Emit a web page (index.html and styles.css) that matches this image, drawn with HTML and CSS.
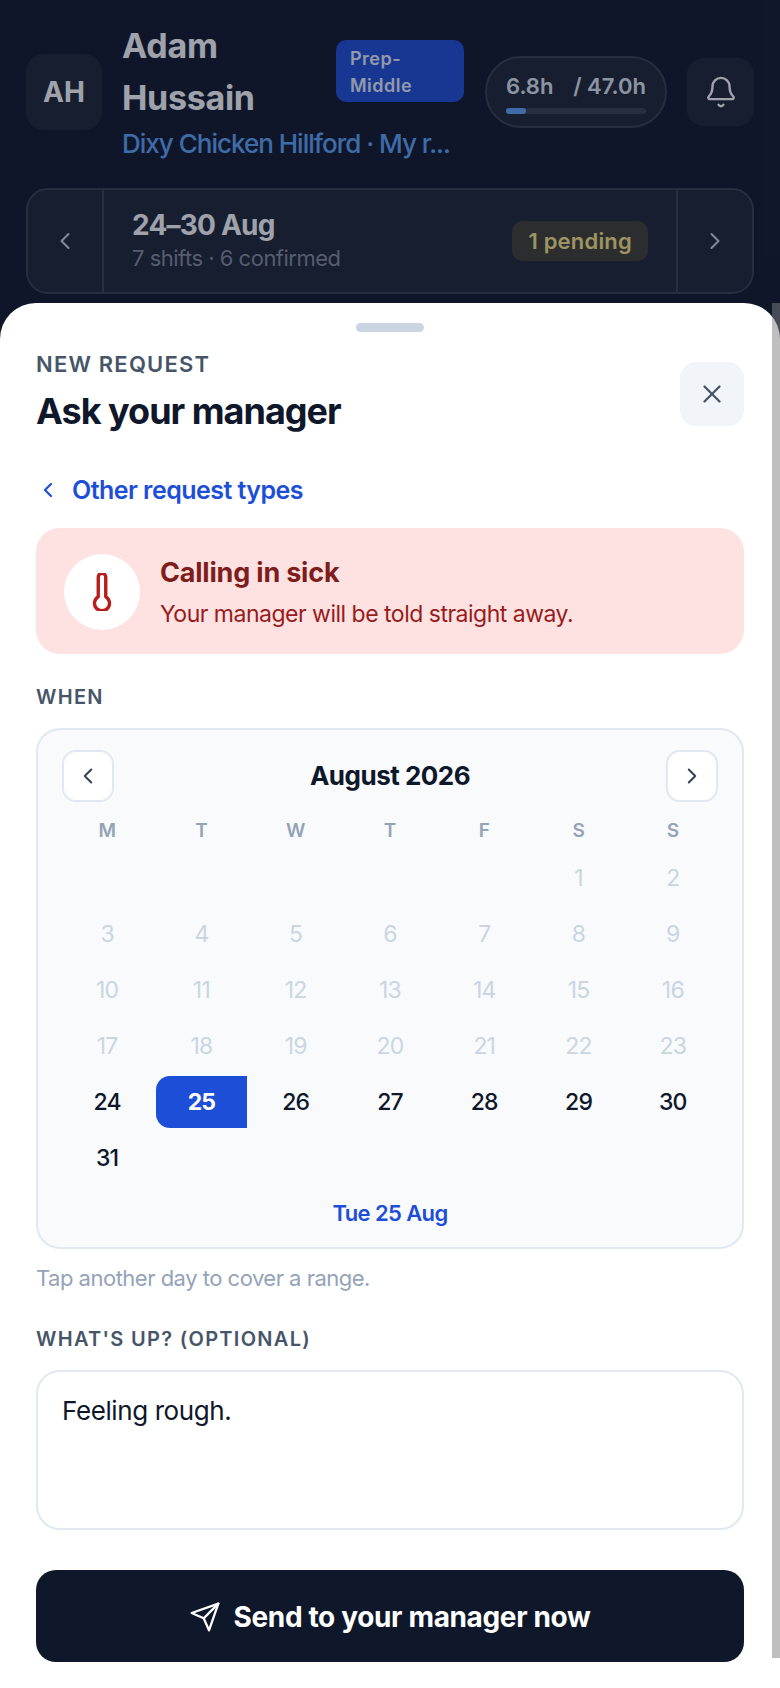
FILE: index.html
```html
<!DOCTYPE html>
<html lang="en">

<head>
    <meta charset="UTF-8">
    <meta name="viewport" content="width=device-width, initial-scale=1.0">
    <title>Ask your manager</title>
    <link rel="stylesheet" href="styles.css">
</head>

<body>
    <header class="top">
        <div class="top-row">
            <div class="avatar">AH</div>
            <div class="who">
                <div class="who-line">
                    <h1 class="who-name">Adam Hussain</h1>
                    <span class="role">Prep-Middle</span>
                </div>
                <p class="who-site">Dixy Chicken Hillford · My r...</p>
            </div>
            <div class="hours">
                <div class="hours-text"><b>6.8h</b><span>/ 47.0h</span></div>
                <div class="hours-bar"><div class="hours-fill"></div></div>
            </div>
            <button class="bell">
                <svg width="34" height="34" viewBox="0 0 24 24" fill="none" stroke="currentColor" stroke-width="1.700" stroke-linecap="round" stroke-linejoin="round">
                    <path d="M10.3 21a1.9 1.9 0 0 0 3.4 0" />
                    <path d="M3.3 15.3A1 1 0 0 0 4 17h16a1 1 0 0 0 .7-1.700C19.400 14 18 12.500 18 8A6 6 0 0 0 6 8c0 4.500-1.400 6-2.700 7.300" />
                </svg>
            </button>
        </div>
        <div class="week">
            <div class="week-nav">
                <svg width="28" height="28" viewBox="0 0 24 24" fill="none" stroke="currentColor" stroke-width="1.800" stroke-linecap="round" stroke-linejoin="round"><path d="m15 18-6-6 6-6" /></svg>
            </div>
            <div class="week-main">
                <div class="week-text">
                    <div class="week-title">24–30 Aug</div>
                    <div class="week-sub">7 shifts · 6 confirmed</div>
                </div>
                <span class="pending">1 pending</span>
            </div>
            <div class="week-nav week-nav-right">
                <svg width="28" height="28" viewBox="0 0 24 24" fill="none" stroke="currentColor" stroke-width="1.800" stroke-linecap="round" stroke-linejoin="round"><path d="m9 18 6-6-6-6" /></svg>
            </div>
        </div>
    </header>

    <div class="dim"></div>

    <section class="sheet">
        <div class="sheet-body">
            <div class="handle"></div>
            <div class="sheet-head">
                <div>
                    <div class="eyebrow">NEW REQUEST</div>
                    <h2 class="sheet-title">Ask your manager</h2>
                </div>
                <button class="close">
                    <svg width="30" height="30" viewBox="0 0 24 24" fill="none" stroke="currentColor" stroke-width="1.800" stroke-linecap="round" stroke-linejoin="round"><path d="M18 6 6 18" /><path d="m6 6 12 12" /></svg>
                </button>
            </div>
            <a class="back">
                <svg width="24" height="24" viewBox="0 0 24 24" fill="none" stroke="currentColor" stroke-width="2.200" stroke-linecap="round" stroke-linejoin="round"><path d="m15 18-6-6 6-6" /></svg>
                Other request types
            </a>
            <div class="sick">
                <div class="sick-icon">
                    <svg width="30" height="38" viewBox="4 2 16 20" fill="none" stroke="currentColor" stroke-width="1.800" stroke-linecap="round" stroke-linejoin="round"><path d="M14 4v10.540a4 4 0 1 1-4 0V4a2 2 0 0 1 4 0Z" /></svg>
                </div>
                <div class="sick-text">
                    <div class="sick-title">Calling in sick</div>
                    <div class="sick-sub">Your manager will be told straight away.</div>
                </div>
            </div>
            <div class="label label-when">WHEN</div>
            <div class="cal">
                <div class="cal-head">
                    <button class="cal-btn">
                        <svg width="26" height="26" viewBox="0 0 24 24" fill="none" stroke="currentColor" stroke-width="1.800" stroke-linecap="round" stroke-linejoin="round"><path d="m15 18-6-6 6-6" /></svg>
                    </button>
                    <div class="cal-month">August 2026</div>
                    <button class="cal-btn">
                        <svg width="26" height="26" viewBox="0 0 24 24" fill="none" stroke="currentColor" stroke-width="1.800" stroke-linecap="round" stroke-linejoin="round"><path d="m9 18 6-6-6-6" /></svg>
                    </button>
                </div>
                <div class="cal-days">
                    <span>M</span><span>T</span><span>W</span><span>T</span><span>F</span><span>S</span><span>S</span>
                </div>
                <div class="cal-grid">
                    <i></i><i></i><i></i><i></i><i></i><i class="off">1</i><i class="off">2</i>
                    <i class="off">3</i><i class="off">4</i><i class="off">5</i><i class="off">6</i><i class="off">7</i><i class="off">8</i><i class="off">9</i>
                    <i class="off">10</i><i class="off">11</i><i class="off">12</i><i class="off">13</i><i class="off">14</i><i class="off">15</i><i class="off">16</i>
                    <i class="off">17</i><i class="off">18</i><i class="off">19</i><i class="off">20</i><i class="off">21</i><i class="off">22</i><i class="off">23</i>
                    <i>24</i><i class="picked">25</i><i>26</i><i>27</i><i>28</i><i>29</i><i>30</i>
                    <i>31</i>
                </div>
                <div class="cal-picked">Tue 25 Aug</div>
            </div>
            <p class="hint">Tap another day to cover a range.</p>
            <div class="label label-note">WHAT'S UP? (OPTIONAL)</div>
            <div class="note">Feeling rough.</div>
            <button class="send">
                <svg width="32" height="32" viewBox="0 0 24 24" fill="none" stroke="currentColor" stroke-width="1.700" stroke-linecap="round" stroke-linejoin="round"><path d="m22 2-7 20-4-9-9-4Z" /><path d="M22 2 11 13" /></svg>
                Send to your manager now
            </button>
        </div>
        <div class="scroll"></div>
    </section>
</body>

</html>
```

FILE: styles.css
```css
* {
    box-sizing: border-box;
}

html,
body {
    margin: 0;
    height: 1688px;
    overflow: hidden;
}

body {
    background: #0f172a;
    font-family: Inter, "Noto Sans", sans-serif;
    color: #0f172a;
}

button {
    border: 0;
    padding: 0;
    font-family: inherit;
}

h1,
h2,
p {
    margin: 0;
}

/* header behind the sheet */
.top {
    padding: 20px 26px 0 26px;
    color: #fff;
}

.top-row {
    display: flex;
    align-items: center;
    height: 148px;
}

.avatar {
    width: 76px;
    height: 76px;
    margin-top: -5px;
    border-radius: 18px;
    background: #1c2334;
    display: flex;
    align-items: center;
    justify-content: center;
    font-size: 28px;
    font-weight: 700;
    flex: none;
}

.who {
    width: 342px;
    margin-left: 20px;
    margin-top: -6px;
    flex: none;
}

.who-line {
    display: flex;
    align-items: center;
    justify-content: space-between;
}

.who-name {
    width: 180px;
    font-size: 34px;
    line-height: 52px;
    font-weight: 700;
    letter-spacing: -0.300px;
}

.role {
    width: 128px;
    margin-top: -2px;
    padding: 5px 14px 3px 14px;
    border-radius: 10px;
    background: #1d4ed8;
    color: #eaf0ff;
    font-size: 18px;
    line-height: 27px;
    font-weight: 600;
    letter-spacing: 0.500px;
}

.who-site {
    margin-top: 1px;
    font-size: 26px;
    line-height: 38px;
    font-weight: 500;
    letter-spacing: -1px;
    color: #60a5fa;
    white-space: nowrap;
}

.hours {
    width: 182px;
    height: 72px;
    margin-left: 21px;
    margin-top: -5px;
    padding: 14px 19px 0 19px;
    border: 2px solid #373e4e;
    border-radius: 36px;
    background: #1c2334;
    flex: none;
}

.hours-text {
    display: flex;
    justify-content: space-between;
    font-size: 22px;
    line-height: 28px;
    font-weight: 600;
    color: #e2e8f0;
}

.hours-text b {
    font-weight: 600;
}

.hours-bar {
    height: 6px;
    margin-top: 8px;
    border-radius: 3px;
    background: #373e4e;
}

.hours-fill {
    width: 14%;
    height: 100%;
    border-radius: 3px;
    background: #60a5fa;
}

.bell {
    width: 67px;
    height: 68px;
    margin-left: 20px;
    margin-top: -5px;
    border-radius: 16px;
    background: #1c2334;
    color: #fff;
    display: flex;
    align-items: center;
    justify-content: center;
    flex: none;
}

.week {
    display: flex;
    height: 106px;
    margin-top: 20px;
    border: 2px solid #373e4e;
    border-radius: 22px;
    background: #1c2334;
}

.week-nav {
    width: 76px;
    border-right: 2px solid #373e4e;
    display: flex;
    align-items: center;
    justify-content: center;
    color: #cbd5e1;
    flex: none;
}

.week-nav-right {
    border-right: 0;
    border-left: 2px solid #373e4e;
}

.week-main {
    flex: 1;
    display: flex;
    align-items: center;
    justify-content: space-between;
    padding: 0 28px;
}

.week-text {
    padding-bottom: 3px;
}

.week-title {
    font-size: 28px;
    line-height: 36px;
    font-weight: 700;
    letter-spacing: -0.800px;
}

.week-sub {
    font-size: 22px;
    line-height: 30px;
    letter-spacing: -0.500px;
    color: #858c9c;
}

.pending {
    padding: 5px 16px;
    border-radius: 10px;
    background: rgba(251, 191, 36, 0.16);
    color: #fde68a;
    font-size: 22px;
    line-height: 30px;
    font-weight: 600;
    letter-spacing: 0.200px;
}

.dim {
    position: absolute;
    left: 0;
    top: 0;
    width: 780px;
    height: 1688px;
    background: rgba(15, 23, 42, 0.4);
}

/* bottom sheet */
.sheet {
    position: absolute;
    left: 0;
    top: 303px;
    width: 780px;
    height: 1385px;
    border-radius: 36px 36px 0 0;
    background: #fff;
}

.sheet-body {
    padding: 20px 36px 0 36px;
}

.scroll {
    position: absolute;
    right: 0;
    top: 0;
    width: 8px;
    height: 1355px;
    background: rgba(128, 128, 128, 0.5);
}

.handle {
    width: 68px;
    height: 9px;
    margin-left: 320px;
    border-radius: 5px;
    background: #cbd5e1;
}

.sheet-head {
    display: flex;
    justify-content: space-between;
    margin-top: 16px;
}

.eyebrow,
.label {
    font-size: 20px;
    line-height: 32px;
    font-weight: 600;
    letter-spacing: 1.300px;
    color: #475569;
}

.eyebrow {
    font-size: 22px;
    letter-spacing: 1.200px;
}

.sheet-title {
    margin-top: 7px;
    font-size: 36px;
    line-height: 48px;
    font-weight: 700;
    letter-spacing: -1px;
}

.close {
    width: 64px;
    height: 64px;
    margin-top: 14px;
    border-radius: 16px;
    background: #f1f5f9;
    color: #475569;
    display: flex;
    align-items: center;
    justify-content: center;
}

.back {
    display: flex;
    align-items: center;
    gap: 12px;
    margin-top: 37px;
    color: #1d4ed8;
    font-size: 25px;
    line-height: 36px;
    font-weight: 600;
    letter-spacing: -0.550px;
}

.sick {
    display: flex;
    align-items: center;
    gap: 20px;
    height: 126px;
    margin-top: 20px;
    padding: 2px 28px 0 28px;
    border-radius: 24px;
    background: #fee2e2;
}

.sick-icon {
    width: 76px;
    height: 76px;
    border-radius: 50%;
    background: #fff;
    color: #b91c1c;
    display: flex;
    align-items: center;
    justify-content: center;
    flex: none;
}

.sick-text {
    margin-top: 2px;
}

.sick-title {
    font-size: 27px;
    line-height: 36px;
    font-weight: 700;
    letter-spacing: -0.200px;
    color: #7f1d1d;
}

.sick-sub {
    margin-top: 6px;
    font-size: 23px;
    line-height: 34px;
    letter-spacing: -0.500px;
    color: #991b1b;
}

.label-when {
    margin-top: 27px;
}

.cal {
    height: 521px;
    margin-top: 15px;
    padding: 20px 24px 0 24px;
    border: 2px solid #e2e8f0;
    border-radius: 24px;
    background: #f8fafc;
}

.cal-head {
    display: flex;
    align-items: center;
    justify-content: space-between;
}

.cal-btn {
    width: 52px;
    height: 52px;
    border: 2px solid #e2e8f0;
    border-radius: 14px;
    background: #fff;
    color: #334155;
    display: flex;
    align-items: center;
    justify-content: center;
}

.cal-month {
    margin-top: -2px;
    font-size: 26px;
    font-weight: 700;
    letter-spacing: -0.500px;
}

.cal-days,
.cal-grid {
    display: grid;
    grid-template-columns: repeat(7, 1fr);
    column-gap: 4px;
    text-align: center;
}

.cal-days {
    margin-top: 15px;
    font-size: 19px;
    line-height: 28px;
    font-weight: 600;
    color: #94a3b8;
}

.cal-grid {
    row-gap: 4px;
    margin-top: 7px;
    font-size: 23px;
    font-weight: 500;
    letter-spacing: -0.800px;
}

.cal-grid i {
    height: 52px;
    font-style: normal;
    line-height: 52px;
}

.cal-grid .off {
    color: #cbd5e1;
    font-weight: 400;
}

.cal-grid .picked {
    border-radius: 14px 0 0 14px;
    background: #1d4ed8;
    color: #fff;
    font-weight: 700;
}

.cal-picked {
    margin-top: 12px;
    text-align: center;
    color: #1d4ed8;
    font-size: 22px;
    line-height: 34px;
    font-weight: 600;
    letter-spacing: -0.600px;
}

.hint {
    margin-top: 13px;
    font-size: 22px;
    line-height: 32px;
    letter-spacing: -0.500px;
    color: #94a3b8;
}

.label-note {
    margin-top: 29px;
}

.note {
    height: 160px;
    margin-top: 15px;
    padding: 21px 24px;
    border: 2px solid #e2e8f0;
    border-radius: 24px;
    background: #fff;
    font-size: 26px;
    line-height: 36px;
    letter-spacing: -0.400px;
}

.send {
    width: 100%;
    height: 92px;
    margin-top: 40px;
    padding-top: 2px;
    border-radius: 20px;
    background: #0f172a;
    color: #fff;
    font-size: 28px;
    font-weight: 700;
    letter-spacing: -0.350px;
    display: flex;
    align-items: center;
    justify-content: center;
    gap: 12px;
}
```
